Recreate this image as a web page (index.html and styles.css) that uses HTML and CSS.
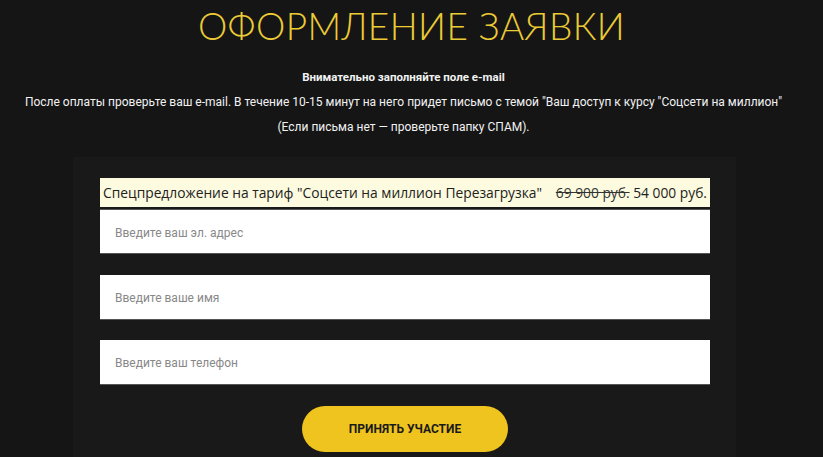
FILE: index.html
```html
<!DOCTYPE html>
<html lang="ru">
<head>
    <meta charset="UTF-8">
    <meta name="viewport" content="width=device-width, initial-scale=1.0">
    <title>Оформление заявки</title>
    <link rel="stylesheet" href="styles.css">
</head>
<body>
    <div class="page">
        <h1 class="title">ОФОРМЛЕНИЕ ЗАЯВКИ</h1>

        <div class="notice">
            <p class="notice-strong">Внимательно заполняйте поле e-mail</p>
            <p>После оплаты проверьте ваш e-mail. В течение 10-15 минут на него придет письмо с темой "Ваш доступ к курсу "Соцсети на миллион"</p>
            <p>(Если письма нет — проверьте папку СПАМ).</p>
        </div>

        <div class="order-card">
            <div class="offer">
                Спецпредложение на тариф "Соцсети на миллион Перезагрузка"
                <span class="price"><s>69 900 руб.</s> 54 000 руб.</span>
            </div>

            <form class="order-form">
                <input type="email" class="field field-first" placeholder="Введите ваш эл. адрес">
                <input type="text" class="field" placeholder="Введите ваше имя">
                <input type="tel" class="field" placeholder="Введите ваш телефон">
                <button type="submit" class="submit-btn">ПРИНЯТЬ УЧАСТИЕ</button>
            </form>
        </div>
    </div>
</body>
</html>
```

FILE: styles.css
```css
* {
    margin: 0;
    padding: 0;
    box-sizing: border-box;
}

body {
    background: #151515;
    color: #fff;
    font-family: Roboto, "Liberation Sans", sans-serif;
    min-height: 100vh;
    overflow: hidden;
}

.page {
    display: flex;
    flex-direction: column;
    align-items: center;
}

.title {
    font-family: Lato, "Noto Sans", sans-serif;
    font-weight: 300;
    font-size: 37px;
    letter-spacing: 0.4px;
    color: #eccb35;
    line-height: 50px;
    margin-top: 1px;
}

.notice {
    text-align: center;
    font-size: 12px;
    line-height: 25px;
    color: #f2f2f2;
    margin-top: 14px;
    margin-right: 16px;
}

.notice-strong {
    font-weight: 700;
    font-size: 11.5px;
}

.order-card {
    background: #1a1919;
    width: 663px;
    margin-top: 17px;
    margin-right: 14px;
    padding: 21px 26px 0 27px;
    min-height: 320px;
}

.offer {
    background: #fdfbdf;
    color: #222;
    font-family: "Open Sans", "Noto Sans", sans-serif;
    font-size: 13.8px;
    line-height: 29px;
    padding-left: 3px;
    display: flex;
    justify-content: space-between;
    white-space: nowrap;
}

.price {
    padding-right: 3px;
}

.price s {
    color: #333;
}

.order-form {
    display: flex;
    flex-direction: column;
    align-items: center;
    gap: 20.5px;
}

.field {
    width: 100%;
    height: 45px;
    border: none;
    border-bottom: 1px solid #555;
    background: #fff;
    padding: 2px 15px 0;
    font-family: Roboto, sans-serif;
    font-size: 12px;
    outline: none;
}

.field::placeholder {
    color: #888;
}

.field-first {
    margin-top: 2px;
    border-top: 1px solid #555;
}

.submit-btn {
    width: 206px;
    height: 46px;
    border: none;
    border-radius: 23px;
    background: #efc41e;
    color: #1a1a1a;
    font-family: Roboto, sans-serif;
    font-weight: 700;
    font-size: 12px;
    cursor: pointer;
}
```
